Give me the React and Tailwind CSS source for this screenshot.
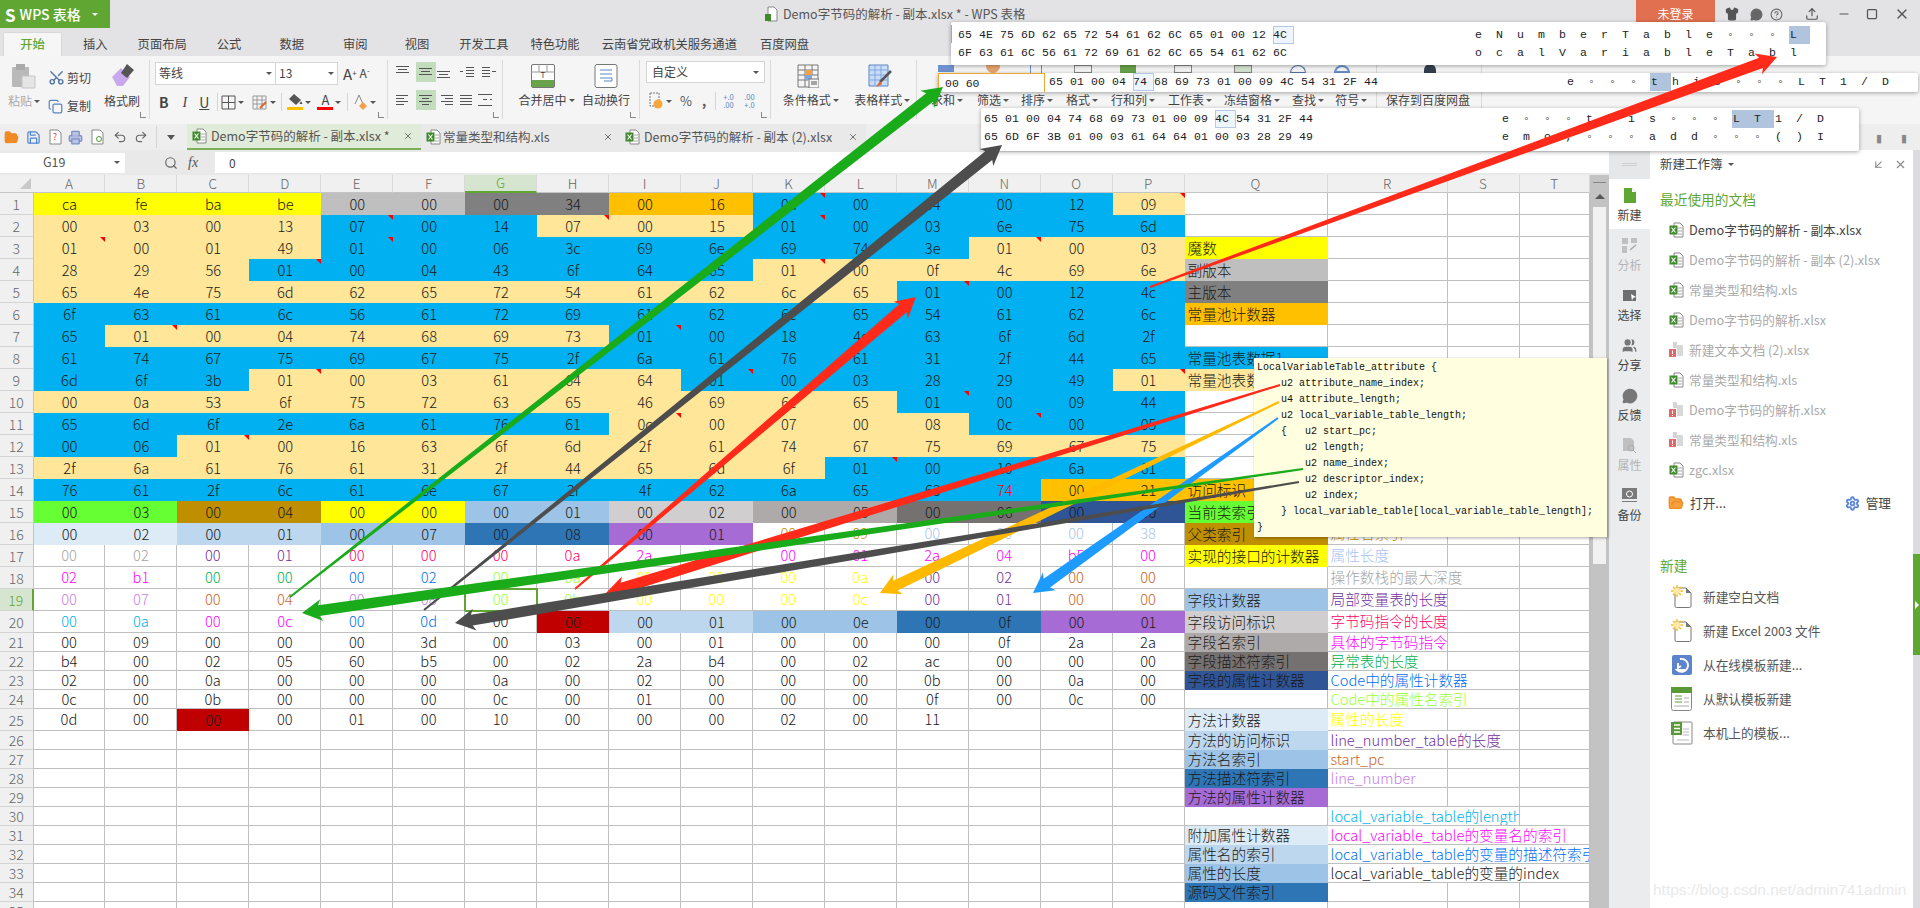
import React from 'react';
import { Scissors, Copy, Undo2, Redo2, Save, Printer, FolderOpen, Search, X, Minus, Square, Shirt, HelpCircle, Settings, Users, MessageCircle, Upload, ArrowDownLeft } from 'lucide-react';

const COLS = 'ABCDEFGHIJKLMNOP'.split('');
const DATA = [
  'ca fe ba be 00 00 00 34 00 16 0a 00 04 00 12 09',
  '00 03 00 13 07 00 14 07 00 15 01 00 03 6e 75 6d',
  '01 00 01 49 01 00 06 3c 69 6e 69 74 3e 01 00 03',
  '28 29 56 01 00 04 43 6f 64 65 01 00 0f 4c 69 6e',
  '65 4e 75 6d 62 65 72 54 61 62 6c 65 01 00 12 4c',
  '6f 63 61 6c 56 61 72 69 61 62 6c 65 54 61 62 6c',
  '65 01 00 04 74 68 69 73 01 00 18 4c 63 6f 6d 2f',
  '61 74 67 75 69 67 75 2f 6a 61 76 61 31 2f 44 65',
  '6d 6f 3b 01 00 03 61 64 64 01 00 03 28 29 49 01',
  '00 0a 53 6f 75 72 63 65 46 69 6c 65 01 00 09 44',
  '65 6d 6f 2e 6a 61 76 61 0c 00 07 00 08 0c 00 05',
  '00 06 01 00 16 63 6f 6d 2f 61 74 67 75 69 67 75',
  '2f 6a 61 76 61 31 2f 44 65 6d 6f 01 00 10 6a 61',
  '76 61 2f 6c 61 6e 67 2f 4f 62 6a 65 63 74 00 21',
  '00 03 00 04 00 00 00 01 00 02 00 05 00 06 00 00',
  '00 02 00 01 00 07 00 08 00 01 00 09 00 00 00 38',
  '00 02 00 01 00 00 00 0a 2a b7 00 01 2a 04 b5 00',
  '02 b1 00 00 00 02 00 0a 00 00 00 0a 00 02 00 00',
  '00 07 00 04 00 08 00 0b 00 00 00 0c 00 01 00 00',
  '00 0a 00 0c 00 0d 00 00 00 01 00 0e 00 0f 00 01',
  '00 09 00 00 00 3d 00 03 00 01 00 00 00 0f 2a 2a',
  'b4 00 02 05 60 b5 00 02 2a b4 00 02 ac 00 00 00',
  '02 00 0a 00 00 00 0a 00 02 00 00 00 0b 00 0a 00',
  '0c 00 0b 00 00 00 0c 00 01 00 00 00 0f 00 0c 00',
  '0d 00 00 00 01 00 10 00 00 00 02 00 11',
].map((r) => r.split(' '));

const FILLS = [
  'YYYYGGDDOOBBBBBP','PPPPBBBPPPBBBBBB','PPPPBBBBBBBBBPPP','PPPBBBBBBBPPPPPP','PPPPPPPPPPPPBBBB',
  'BBBBBBBBBBBBBBBB','BPPPPPPPBBBBBBBB','BBBBBBBBBBBBBBBB','BBBPPPPPPBBBBBBP','PPPPPPPPPPPPBBBB',
  'BBBBBBBBPPPPPBBB','BBPPPPPPPPPPPPPP','PPPPPPPPPPPBBBBB','BBBBBBBBBBBBBBOO','LLUUYY33556677NN',
  '11223344VV......','................','................','................','.......R223344VV',
  '................','................','................','................','..R.............',
];
const BG = {
  Y:'bg-[#ffff00]',G:'bg-[#bfbfbf]',D:'bg-[#808080]',O:'bg-[#ffc000]',B:'bg-[#00b0f0]',P:'bg-[#ffe699]',
  L:'bg-[#66ff33]',U:'bg-[#bf8f00]',1:'bg-[#ddebf7]',2:'bg-[#bdd7ee]',3:'bg-[#9dc3e6]',4:'bg-[#2e75b6]',
  V:'bg-[#a66bd4]',5:'bg-[#d0cece]',6:'bg-[#aeaaaa]',7:'bg-[#767171]',N:'bg-[#2f5597]',R:'bg-[#c00000]',
};
const TC = {
  a:'text-[#a5a5a5]',b:'text-[#7030a0]',c:'text-[#ff0066]',d:'text-[#ff00ff]',e:'text-[#00b050]',f:'text-[#0070f0]',
  g:'text-[#99ff33]',h:'text-[#ffff00]',i:'text-[#d0641e]',j:'text-[#c77de8]',k:'text-[#00b0f0]',l:'text-[#bf8f00]',
  m:'text-[#a9c4ee]',n:'text-[#ff0000]','.':'text-[#1a1a1a]',
};
const TEXTS = {
  13:'.............n..',15:'..........llmmmm',16:'aabbccccdddddddd',17:'ddeeffgghhhhbbii',18:'jjiijjgghhhhbbii',19:'kkddff..........',
};
const MARKS = new Set(['K1','P1','E2','H2','K2','A3','E3','N3','D4','K4','M5','B7','I7','D9','J9','P9','M10','I11','N11','C12','L13']);

const Q = {
  3:['魔数','Y'],4:['副版本','G'],5:['主版本','D'],6:['常量池计数器','O'],8:['常量池表数据1','B'],9:['常量池表数据2','P'],
  14:['访问标识','O'],15:['当前类索引','L'],16:['父类索引','U'],17:['实现的接口的计数器','Y'],19:['字段计数器','3'],
  20:['字段访问标识','5'],21:['字段名索引','6'],22:['字段描述符索引','7'],23:['字段的属性计数器','N'],25:['方法计数器','1'],
  26:['方法的访问标识','2'],27:['方法名索引','3'],28:['方法描述符索引','4'],29:['方法的属性计数器','V'],31:['附加属性计数器','1'],
  32:['属性名的索引','2'],33:['属性的长度','3'],34:['源码文件索引','4'],
};
const R = {
  16:['属性名索引','l',1],17:['属性长度','m',1],18:['操作数栈的最大深度','a',2],19:['局部变量表的长度','b',1],20:['字节码指令的长度','c',1],
  21:['具体的字节码指令','d',1],22:['异常表的长度','e',1],23:['Code中的属性计数器','f',2],24:['Code中的属性名索引','g',2],25:['属性的长度','h',1],
  26:['line_number_table的长度','b',2],27:['start_pc','i',1],28:['line_number','j',1],30:['local_variable_table的length','k',2],
  31:['local_variable_table的变量名的索引','d',3],32:['local_variable_table的变量的描述符索引','f',3],33:['local_variable_table的变量的index','.',3],
};
const LINE = 'border-r border-b border-[#bfbfbf]';

function Arrow({ t, h, c, w0 = 2, w1 = 11, hl = 17, hw = 11 }) {
  const dx = h[0] - t[0], dy = h[1] - t[1], L = Math.hypot(dx, dy);
  const ux = dx / L, uy = dy / L, nx = -uy, ny = ux;
  const nk = [h[0] - ux * hl, h[1] - uy * hl];
  const bk = [h[0] - ux * (hl + 3), h[1] - uy * (hl + 3)];
  const pts = [
    [t[0] + nx * w0 / 2, t[1] + ny * w0 / 2],
    [nk[0] + nx * w1 / 2, nk[1] + ny * w1 / 2],
    [bk[0] + nx * hw, bk[1] + ny * hw],
    h,
    [bk[0] - nx * hw, bk[1] - ny * hw],
    [nk[0] - nx * w1 / 2, nk[1] - ny * w1 / 2],
    [t[0] - nx * w0 / 2, t[1] - ny * w0 / 2],
  ].map((p) => p.join(',')).join(' ');
  return <polygon points={pts} fill={c} />;
}

const Hex = ({ s, hi }) => (
  <div className="flex">
    {s.split(' ').map((b, i) => (
      <span key={i} className={`w-[21px] h-[18px] leading-[18px] shrink-0 text-left ${hi === i ? 'bg-[#eef5fc] shadow-[inset_0_0_0_1px_#b4c9e6]' : ''}`}>{b}</span>
    ))}
  </div>
);
const Asc = ({ s, hi = [] }) => (
  <div className="flex">
    {s.split(' ').map((b, i) => (
      <span key={i} className={`w-[21px] h-[18px] leading-[18px] shrink-0 text-left pl-[1px] ${hi.includes(i) ? 'bg-[#b0c4de]' : ''}`}>{b}</span>
    ))}
  </div>
);

const XlsIcon = () => (
  <svg width="15" height="16" viewBox="0 0 15 16" className="shrink-0">
    <path d="M5 1h6l3 3v11H5z" fill="#fff" stroke="#888" />
    <path d="M9 6h4M9 9h4M9 12h4" stroke="#aaa" />
    <rect x="0.5" y="3.5" width="8" height="9" fill="#3f8a2c" />
    <path d="M2.5 5.500l4 5M6.500 5.500l-4 5" stroke="#fff" strokeWidth="1.2" />
  </svg>
);
const ErrIcon = () => (
  <svg width="15" height="16" viewBox="0 0 15 16" className="shrink-0">
    <path d="M4 0h4v6H4z" fill="#d4d4d4" />
    <path d="M8 3h6v11H8z" fill="#d8d8d8" />
    <rect x="0" y="7" width="7" height="8" fill="#e0686a" />
    <path d="M3.500 8.500v3.500M3.500 13v1" stroke="#fff" />
  </svg>
);
const NewDoc = () => (
  <svg width="22" height="24" viewBox="0 0 22 24">
    <path d="M4 3h11l5 5v13a1.500 1.500 0 0 1-1.500 1.500h-13A1.500 1.500 0 0 1 4 21z" fill="#fff" stroke="#777" />
    <path d="M15 3l5 5h-5z" fill="#777" />
    <circle cx="6" cy="6" r="3.500" fill="#ffe9a8" />
    <path d="M6 0v2.500M6 9.500V12M0 6h2.500M9.500 6H12M2 2l1.800 1.800M8.200 8.200L10 10M10 2L8.200 3.800M3.800 8.200L2 10" stroke="#f9bd20" strokeWidth="1.500" />
  </svg>
);

const Lines = ({ rows, w = 16, h = 14, c = '#555' }) => (
  <svg width={w} height={h} viewBox={`0 0 ${w} ${h}`} className="shrink-0">
    {rows.map(([a, b, y], i) => <path key={i} d={`M${a} ${y + 0.5}H${b}`} stroke={c} />)}
  </svg>
);
const Dd = ({ c = 'ml-[2px]' }) => <span className={`inline-block ${c} border-x-[3px] border-x-transparent border-t-[3px] border-t-[#555] shrink-0`} />;
const Launch = () => <span className="absolute right-[3px] bottom-[1px] w-[6px] h-[6px] border-l border-b border-[#888]" />;

function RibbonSep({ w, children }) {
  return <div className={`${w} h-[59px] relative border-r border-[#dadada] shrink-0 flex`}>{children}</div>;
}

const TABS = [
  ['插入', 'ml-[21px]'], ['页面布局', 'ml-[30px]'], ['公式', 'ml-[30px]'], ['数据', 'ml-[38px]'], ['审阅', 'ml-[39px]'], ['视图', 'ml-[37px]'],
  ['开发工具', 'ml-[30px]'], ['特色功能', 'ml-[22px]'], ['云南省党政机关服务通道', 'ml-[22px]'], ['百度网盘', 'ml-[23px]'],
];
const MENU = [
  ['筛选', 'ml-[14px]'], ['排序', 'ml-[12px]'], ['格式', 'ml-[13px]'], ['行和列', 'ml-[13px]'], ['工作表', 'ml-[13px]'], ['冻结窗格', 'ml-[12px]'], ['查找', 'ml-[12px]'], ['符号', 'ml-[11px]'],
];
const RECENT = [
  ['Demo字节码的解析 - 副本.xlsx', 0, 'text-[#444]'], ['Demo字节码的解析 - 副本 (2).xlsx', 0, 'text-[#aaa]'], ['常量类型和结构.xls', 0, 'text-[#aaa]'],
  ['Demo字节码的解析.xlsx', 0, 'text-[#aaa]'], ['新建文本文档 (2).xlsx', 1, 'text-[#aaa]'], ['常量类型和结构.xls', 0, 'text-[#aaa]'],
  ['Demo字节码的解析.xlsx', 1, 'text-[#aaa]'], ['常量类型和结构.xls', 1, 'text-[#aaa]'], ['zgc.xlsx', 0, 'text-[#aaa]'],
];

const SideItem = ({ label, icon, active, dim }) => (
  <div className={`h-[50px] flex flex-col items-center justify-center gap-[1px] ${active ? 'bg-white' : ''} ${dim ? 'text-[#b5b5b5]' : 'text-[#444]'}`}>
    <div className="h-[20px] flex items-center">{icon}</div>
    <span className="text-[12px] leading-[16px]">{label}</span>
  </div>
);

export default function App() {
  const rowNums = Array.from({ length: 35 }, (_, i) => i + 1);
  return (
    <div className="relative w-[1920px] h-[908px] overflow-hidden bg-white text-[12px] text-[#333] [font-family:'Noto_Sans_CJK_SC','Noto_Sans',sans-serif]">
      {/* title bar */}
      <div className="h-[28px] bg-[#e3e3e5] flex items-center">
        <div className="w-[110px] h-[28px] bg-[#5fa732] text-white flex items-center pl-[5px] shrink-0">
          <span className="text-[17px] font-bold leading-none">S</span>
          <span className="ml-[4px] text-[14px] font-medium">WPS 表格</span>
          <Dd c="ml-[11px] border-t-white" />
        </div>
        <svg width="14" height="16" viewBox="0 0 14 16" className="ml-[654px]"><path d="M4 1h6l3 3v11H4z" fill="#fff" stroke="#888" /><rect x="1" y="8" width="6" height="7" fill="#3f8a2c" /></svg>
        <span className="ml-[5px] text-[12.500px] text-[#555]">Demo字节码的解析 - 副本.xlsx * - WPS 表格</span>
        <div className="ml-auto w-[79px] h-[28px] bg-[#e07050] text-white flex items-center justify-center text-[12px] mr-[10px]">未登录</div>
        <Shirt size={14} className="text-[#555] fill-[#555]" />
        <MessageCircle size={13} className="ml-[11px] text-[#666] fill-[#666]" />
        <HelpCircle size={13} className="ml-[7px] text-[#666]" />
        <Upload size={14} className="ml-[22px] text-[#555]" />
        <Minus size={14} className="ml-[18px] text-[#555]" />
        <Square size={12} className="ml-[15px] text-[#555]" strokeWidth={2.5} />
        <X size={16} className="ml-[16px] mr-[10px] text-[#555]" />
      </div>
      {/* tabs */}
      <div className="h-[28px] bg-[#e3e3e5] flex items-end pl-[3px] text-[12.300px] text-[#444]">
        <div className="w-[59px] h-[24px] bg-[#f6f6f7] border border-b-0 border-[#d8d8d8] rounded-t-[2px] flex items-center justify-center text-[#5fa732] font-medium">开始</div>
        {TABS.map(([t, c]) => <span key={t} className={`${c} h-[24px] leading-[24px]`}>{t}</span>)}
      </div>
      {/* ribbon */}
      <div className="h-[68px] bg-[#f5f5f6] pt-[4px] flex text-[#444]">
        <RibbonSep w="w-[150px]">
          <div className="w-[48px] flex flex-col items-center pt-[3px] text-[#aaa]">
            <svg width="26" height="26" viewBox="0 0 26 26"><rect x="1" y="4" width="17" height="20" rx="1" fill="#b9b9b9" /><rect x="5" y="1" width="9" height="6" fill="#aaa" /><path d="M11 13h13v12H11z" fill="#e5e5e5" stroke="#c5c5c5" /></svg>
            <span className="mt-[3px] flex items-center">粘贴<Dd /></span>
          </div>
          <div className="w-[54px] flex flex-col pt-[2px]">
            <div className="h-[31px] flex items-center"><Scissors size={17} className="mr-[2px] text-[#5577aa] -rotate-90" />剪切</div>
            <div className="h-[26px] flex items-center"><Copy size={15} className="mr-[4px] text-[#5b86c4]" />复制</div>
          </div>
          <div className="w-[40px] flex flex-col items-center pt-[3px]">
            <svg width="26" height="26" viewBox="0 0 26 26"><path d="M3 14l9-9 9 9-7 9H8z" fill="#c9a9ee" /><path d="M12 10l6-9 7 6-7 8z" fill="#555" /></svg>
            <span className="mt-[3px]">格式刷</span>
          </div>
          <Launch />
        </RibbonSep>
        <RibbonSep w="w-[238px]">
          <div className="flex flex-col pl-[5px] w-full">
            <div className="flex items-center h-[24px] mt-[1px]">
              <div className="w-[121px] h-[23px] bg-white border border-[#d4d4d4] flex items-center px-[3px]">等线<Dd c="ml-auto" /></div>
              <div className="w-[62px] h-[23px] bg-white border border-l-0 border-[#d4d4d4] flex items-center px-[3px]">13<Dd c="ml-auto" /></div>
              <span className="ml-[5px] text-[15px] leading-none">A<sup className="text-[8px]">+</sup></span>
              <span className="ml-[3px] text-[12px] leading-none">A<sup className="text-[8px]">-</sup></span>
            </div>
            <div className="flex items-center h-[30px] mt-[2px] text-[13px]">
              <b className="ml-[4px] text-[14px]">B</b>
              <i className="ml-[14px] text-[14px] [font-family:'Liberation_Serif',serif]">I</i>
              <u className="ml-[12px] text-[14px]">U</u>
              <span className="ml-[8px] w-px h-[18px] bg-[#d5d5d5]" />
              <svg width="15" height="15" viewBox="0 0 15 15" className="ml-[3px]"><path d="M1 1h13v13H1zM7.500 1v13M1 7.500h13" fill="none" stroke="#555" /></svg><Dd />
              <svg width="16" height="15" viewBox="0 0 16 15" className="ml-[8px]"><path d="M1 1h13v13H1zM1 5h13M1 9h13M5 1v13M10 1v13" fill="none" stroke="#999" /><path d="M8 13l6-6" stroke="#e0642a" strokeWidth="2" /></svg><Dd />
              <span className="ml-[5px] w-px h-[18px] bg-[#d5d5d5]" />
              <div className="ml-[5px] w-[16px] flex flex-col items-center"><svg width="15" height="12" viewBox="0 0 15 12"><path d="M6 0l7 6-5 5-7-6z" fill="#555" /><path d="M13 7l1.500 3h-3z" fill="#555" /></svg><span className="w-[16px] h-[3px] mt-[1px] bg-[#ffbe00]" /></div><Dd />
              <div className="ml-[6px] w-[16px] flex flex-col items-center"><span className="text-[13px] leading-[12px]">A</span><span className="w-[16px] h-[3px] mt-[1px] bg-[#ff0000]" /></div><Dd />
              <span className="ml-[6px] w-px h-[18px] bg-[#d5d5d5]" />
              <svg width="15" height="17" viewBox="0 0 15 17" className="ml-[5px]"><path d="M2 10L6 1l4 9" fill="none" stroke="#888" /><path d="M6 12l4-4 4 4-4 4z" fill="#f5a049" /></svg><Dd />
            </div>
          </div>
          <Launch />
        </RibbonSep>
        <RibbonSep w="w-[115px]">
          <div className="flex flex-col pl-[7px] w-full">
            <div className="flex items-center h-[20px] mt-[2px]">
              <Lines rows={[[1,14,1],[3,12,4],[1,14,7]]} />
              <div className="ml-[5px] w-[20px] h-[20px] bg-[#c3dcbd] flex items-center justify-center"><Lines rows={[[1,14,3],[3,12,6],[1,14,9]]} /></div>
              <Lines rows={[[1,14,6],[3,12,9],[1,14,12]]} />
              <span className="ml-[7px]"><Lines rows={[[7,15,2],[7,15,5],[7,15,8],[7,15,11],[1,4,6]]} /></span>
              <span className="ml-[6px]"><Lines rows={[[1,9,2],[1,9,5],[1,9,8],[1,9,11],[11,15,6]]} /></span>
            </div>
            <div className="flex items-center h-[20px] mt-[8px]">
              <Lines rows={[[1,13,2],[1,9,5],[1,13,8],[1,9,11]]} />
              <div className="ml-[5px] w-[20px] h-[20px] bg-[#c3dcbd] flex items-center justify-center"><Lines rows={[[1,14,2],[4,11,5],[1,14,8],[4,11,11]]} /></div>
              <span className="ml-[4px]"><Lines rows={[[1,13,2],[5,13,5],[1,13,8],[5,13,11]]} w={14} /></span>
              <span className="ml-[5px]"><Lines rows={[[1,13,2],[1,13,5],[1,13,8],[1,13,11]]} w={14} /></span>
              <span className="ml-[4px]"><Lines rows={[[1,15,1],[1,15,12],[6,10,6],[13,15,6]]} /></span>
            </div>
          </div>
          <Launch />
        </RibbonSep>
        <RibbonSep w="w-[137px]">
          <div className="w-[79px] flex flex-col items-center pt-[4px]">
            <svg width="24" height="24" viewBox="0 0 24 24"><rect x="0.500" y="0.500" width="23" height="23" rx="1.500" fill="#fff" stroke="#777" /><path d="M0 8h24M8 0v8M16 0v8" stroke="#999" /><rect x="1" y="16" width="22" height="7" fill="#69a34a" /><text x="12" y="14" fontSize="8" textAnchor="middle" fill="#444">T</text></svg>
            <span className="mt-[3px] pl-[8px] flex items-center">合并居中<Dd /></span>
          </div>
          <div className="w-[48px] flex flex-col items-center pt-[4px]">
            <svg width="24" height="24" viewBox="0 0 24 24"><rect x="1" y="0.500" width="22" height="23" rx="2" fill="#fff" stroke="#777" /><path d="M6 6h12M6 10h12M6 14h12v3H10" fill="none" stroke="#5b86c4" /></svg>
            <span className="mt-[3px]">自动换行</span>
          </div>
          <Launch />
        </RibbonSep>
        <RibbonSep w="w-[131px]">
          <div className="flex flex-col pl-[6px]">
            <div className="w-[119px] h-[22px] mt-[1px] bg-white border border-[#d4d4d4] flex items-center px-[5px]">自定义<Dd c="ml-auto" /></div>
            <div className="flex items-center h-[30px] mt-[3px] text-[#555] text-[13px]">
              <svg width="15" height="18" viewBox="0 0 15 18" className="ml-[3px]"><path d="M1 1h9v13H1z" fill="none" stroke="#777" strokeDasharray="2 1" /><circle cx="9" cy="12" r="4.500" fill="#f5a93c" /></svg><Dd />
              <span className="ml-[8px]">%</span>
              <span className="ml-[10px] font-bold">,</span>
              <span className="ml-[9px] w-px h-[18px] bg-[#d5d5d5]" />
              <span className="ml-[7px] text-[7.500px] leading-[8px] w-[14px] text-[#5b86c4]">+.0<br />.00</span>
              <span className="ml-[7px] text-[7.500px] leading-[8px] w-[14px] text-[#5b86c4]">.00<br />+.0</span>
            </div>
          </div>
          <Launch />
        </RibbonSep>
        <RibbonSep w="w-[146px]">
          <div className="w-[74px] flex flex-col items-center pt-[4px]">
            <svg width="22" height="24" viewBox="0 0 22 24"><path d="M1 1h20v22H1zM1 6h20M1 11h20M1 16h10M8 1v22M15 1v10" fill="none" stroke="#777" /><rect x="8" y="6" width="7" height="5" fill="#f5a049" /><rect x="8" y="11" width="7" height="5" fill="#7fa7e0" /><rect x="12" y="15" width="10" height="9" fill="#f5f5f6" stroke="#777" /><path d="M14 20h6M14 18h6" stroke="#555" /></svg>
            <span className="mt-[3px] pl-[6px] flex items-center">条件格式<Dd /></span>
          </div>
          <div className="w-[72px] flex flex-col items-center pt-[4px]">
            <svg width="24" height="24" viewBox="0 0 24 24"><path d="M1 1h19v21H1z" fill="#c8dcf5" stroke="#5b86c4" /><path d="M1 6h19M1 11h19M1 16h19M7 1v21M13 1v21" stroke="#7fa7e0" /><path d="M23 7L12 18" stroke="#555" strokeWidth="2.500" /><path d="M12 17l-4 6 6-3z" fill="#e0642a" /></svg>
            <span className="mt-[3px] pl-[4px] flex items-center">表格样式<Dd /></span>
          </div>
        </RibbonSep>
        <RibbonSep w="w-[460px]">
          <div className="flex items-center h-[20px] mt-[30px] pl-[14px] whitespace-nowrap">
            <span>求和</span><Dd />
            {MENU.map(([t, c]) => <span key={t} className={`${c} flex items-center shrink-0`}>{t}<Dd /></span>)}
          </div>
        </RibbonSep>
        <RibbonSep w="w-[105px]">
          <div className="h-[20px] mt-[30px] pl-[9px] flex items-center whitespace-nowrap">保存到百度网盘</div>
        </RibbonSep>
      </div>
      {/* document tabs */}
      <div className="h-[26px] bg-[#eeeeef] flex items-center text-[12.500px] text-[#555]">
        <FolderOpen size={15} className="ml-[4px] text-[#f08a24] fill-[#f08a24]" />
        <Save size={15} className="ml-[7px] text-[#4f86d2]" />
        <svg width="15" height="16" viewBox="0 0 15 16" className="ml-[6px]"><path d="M3 1h8l3 3v11H3z" fill="#fff" stroke="#888" /><text x="8" y="11" fontSize="9" textAnchor="middle" fill="#d43c3c">?</text></svg>
        <Printer size={15} className="ml-[6px] text-[#7c8fc4] fill-[#b8c2e2]" />
        <svg width="15" height="16" viewBox="0 0 15 16" className="ml-[7px]"><path d="M2 1h8l3 3v11H2z" fill="#fff" stroke="#888" /><circle cx="9" cy="10" r="2.500" fill="none" stroke="#4a9a36" /></svg>
        <Undo2 size={14} className="ml-[8px] text-[#666]" />
        <Redo2 size={14} className="ml-[7px] text-[#666]" />
        <span className="ml-[8px] w-px h-[22px] bg-[#d5d5d5]" />
        <Dd c="ml-[10px] border-x-[4px] border-t-[5px]" />
        <div className="ml-[12px] w-[234px] h-[26px] bg-[#e1ebd9] border-b-2 border-[#7caf5a] flex items-center pl-[5px]">
          <XlsIcon /><span className="ml-[4px]">Demo字节码的解析 - 副本.xlsx *</span><X size={10} className="ml-auto mr-[8px]" />
        </div>
        <div className="w-[197px] h-[26px] bg-[#e9e9ea] flex items-center pl-[5px]">
          <XlsIcon /><span className="ml-[2px]">常量类型和结构.xls</span><X size={10} className="ml-auto mr-[5px]" />
        </div>
        <div className="w-[248px] h-[26px] bg-[#e9e9ea] flex items-center pl-[7px]">
          <XlsIcon /><span className="ml-[4px]">Demo字节码的解析 - 副本 (2).xlsx</span><X size={10} className="ml-auto mr-[8px]" />
        </div>
        <span className="ml-auto mr-[19px] text-[#888] text-[11px]">▮</span>
        <span className="mr-[13px] text-[#888] text-[11px]">▮</span>
      </div>
      {/* body */}
      <div className="flex h-[758px]">
        <div className="w-[1609px] flex flex-col shrink-0">
          <div className="h-[25px] bg-[#e9e9ea] flex items-center">
            <div className="w-[125px] h-[20px] bg-white flex items-center pl-[43px] text-[12.500px] text-[#555]">G19<Dd c="ml-auto mr-[5px]" /></div>
            <Search size={14} className="ml-[39px] text-[#666]" />
            <span className="ml-[10px] text-[14px] italic text-[#555] [font-family:'Liberation_Serif',serif]">fx</span>
            <div className="ml-[17px] flex-1 h-[21px] bg-white pl-[14px] flex items-center text-[#444]">0</div>
          </div>
          <div className="flex flex-1 min-h-0">
            <div className="w-[1590px] overflow-hidden">
              <div className="grid grid-cols-[33.5px_repeat(16,71.95px)_143px_120px_72px_70.3px] grid-rows-[18px_repeat(20,22px)_repeat(4,19px)_22px_repeat(10,19px)] text-[14.670px] font-light leading-none text-[#1a1a1a]">
                <div className="bg-[#f0f0f0] border-b border-[#c4c4c4] flex items-end justify-end p-[3px]">
                  <span className="border-l-[11px] border-b-[11px] border-l-transparent border-b-[#c8c8c8]" />
                </div>
                {[...COLS, 'Q', 'R', 'S', 'T'].map((c) => (
                  <div key={c} className={`border-r border-[#d8d8d8] flex items-center justify-center text-[13.500px] ${c === 'G' ? 'bg-[#d6e5cf] border-b-2 border-b-[#5fa732] text-[#5fa732]' : 'bg-[#f0f0f0] border-b border-b-[#c4c4c4] text-[#666]'}`}>{c}</div>
                ))}
                {rowNums.map((n) => {
                  const r = n - 1;
                  const vals = DATA[r] || [];
                  const fills = FILLS[r] || '................';
                  const tc = TEXTS[r] || '................';
                  const q = Q[n];
                  const rc = R[n];
                  const sSkip = rc && rc[2] >= 2;
                  const tSkip = rc && rc[2] >= 3;
                  return (
                    <React.Fragment key={n}>
                      <div className={`border-b border-[#d4d4d4] flex items-center justify-center text-[14px] ${n === 19 ? 'bg-[#d6e5cf] border-r-2 border-r-[#5fa732] text-[#5fa732]' : 'bg-[#f0f0f0] border-r border-r-[#c4c4c4] text-[#666]'}`}>{n}</div>
                      {COLS.map((c, i) => {
                        const f = fills[i];
                        const sel = n === 19 && c === 'G';
                        return (
                          <div key={c} className={`relative flex items-center justify-center ${f === '.' ? LINE : BG[f]} ${TC[tc[i]]} ${sel ? 'outline-2 -outline-offset-1 outline-[#5fa732]' : ''}`}>
                            {vals[i]}
                            {MARKS.has(c + n) && <span className="absolute top-0 right-0 border-t-[5px] border-l-[5px] border-t-[#ff0000] border-l-transparent" />}
                          </div>
                        );
                      })}
                      <div className={`flex items-center pl-[3px] ${q ? BG[q[1]] : LINE} whitespace-nowrap`}>{q ? q[0] : ''}</div>
                      <div className={`flex items-center pl-[3px] whitespace-nowrap overflow-hidden ${LINE} ${rc ? TC[rc[1]] : ''} ${rc && rc[2] === 2 ? 'col-span-2' : ''} ${rc && rc[2] === 3 ? 'col-span-3' : ''}`}>{rc ? rc[0] : ''}</div>
                      {!sSkip && <div className={LINE} />}
                      {!tSkip && <div className={LINE} />}
                    </React.Fragment>
                  );
                })}
              </div>
            </div>
            <div className="w-[19px] bg-[#c3c3c3] flex flex-col items-center">
              <span className="mt-[7px] w-[13px] h-px bg-[#888]" />
              <span className="mt-[11px] border-x-[5px] border-x-transparent border-b-[5px] border-b-[#555]" />
              <div className="mt-[8px] w-[13px] h-[357px] bg-[#f1f1f1]" />
            </div>
          </div>
        </div>
        {/* sidebar */}
        <div className="w-[41px] bg-[#ebecee] shrink-0 flex flex-col">
          <div className="h-[29px] bg-[#e6e7e9] flex items-center justify-center"><span className="w-[15px] h-[3px] border-y border-[#d0d0d0]" /></div>
          <SideItem active label="新建" icon={<svg width="12" height="15" viewBox="0 0 12 15"><path d="M0 0h8l4 4v11H0z" fill="#5fa732" /><path d="M8 0l4 4H8z" fill="#fff" /></svg>} />
          <SideItem dim label="分析" icon={<svg width="15" height="15" viewBox="0 0 15 15"><path d="M0 0h6v6H0zM0 8h5v7H0zM9 0h6v5H9z" fill="#c0c0c0" /><path d="M8 12l6-5" stroke="#aaa" strokeWidth="1.500" /></svg>} />
          <SideItem label="选择" icon={<svg width="14" height="12" viewBox="0 0 14 12"><rect width="13" height="11" fill="#6f6f6f" /><path d="M8 4l5 3-3 1-1 3z" fill="#fff" /></svg>} />
          <SideItem label="分享" icon={<Users size={15} className="fill-[#777] text-[#777]" />} />
          <SideItem label="反馈" icon={<MessageCircle size={16} className="fill-[#777] text-[#777]" />} />
          <SideItem dim label="属性" icon={<svg width="16" height="16" viewBox="0 0 16 16"><path d="M1 0h8l3 3v10H1z" fill="#c0c0c0" /><circle cx="9" cy="10" r="3" fill="none" stroke="#aaa" /><path d="M11 12l3 3" stroke="#aaa" /></svg>} />
          <SideItem label="备份" icon={<svg width="16" height="15" viewBox="0 0 16 15"><rect width="15" height="11" fill="#7a7a7a" /><path d="M0 13.500h15" stroke="#7a7a7a" /><circle cx="7.500" cy="6" r="3" fill="none" stroke="#fff" /></svg>} />
        </div>
        {/* panel */}
        <div className="w-[263px] bg-white shrink-0 flex flex-col pl-[10px] text-[12.700px]">
          <div className="h-[28px] flex items-center text-[12.500px] text-[#444]">
            新建工作簿<Dd c="ml-[5px]" />
            <ArrowDownLeft size={13} className="ml-auto text-[#888]" />
            <X size={13} className="ml-[9px] mr-[6px] text-[#888]" />
          </div>
          <div className="mt-[11px] text-[#5fa732] text-[13.700px] leading-[20px]">最近使用的文档</div>
          <div className="mt-[6px] flex flex-col">
            {RECENT.map(([t, e, c], i) => (
              <div key={i} className={`h-[30px] pl-[9px] flex items-center whitespace-nowrap ${c}`}>
                {e ? <ErrIcon /> : <XlsIcon />}
                <span className="ml-[5px]">{t}</span>
              </div>
            ))}
          </div>
          <div className="mt-[3px] h-[30px] flex items-center pl-[8px] text-[#444]">
            <FolderOpen size={16} className="text-[#f08a24] fill-[#f5a13c]" />
            <span className="ml-[6px]">打开...</span>
            <Settings size={15} className="ml-auto text-[#5b86d8]" strokeWidth={3} />
            <span className="ml-[6px] mr-[22px]">管理</span>
          </div>
          <div className="mt-[37px] text-[#5fa732] text-[13.700px] leading-[20px]">新建</div>
          <div className="mt-[5px] flex flex-col pl-[11px] text-[#555]">
            <div className="h-[34px] flex items-center"><NewDoc /><span className="ml-[10px]">新建空白文档</span></div>
            <div className="h-[34px] flex items-center"><NewDoc /><span className="ml-[10px]">新建 Excel 2003 文件</span></div>
            <div className="h-[34px] flex items-center">
              <svg width="22" height="22" viewBox="0 0 22 22" className="shrink-0"><rect x="1" y="1" width="20" height="20" rx="2" fill="#5b84cc" /><path d="M9 5a6.500 6.500 0 1 1-3 11l8 0M7 9v5l3-2" fill="none" stroke="#fff" strokeWidth="1.800" /></svg>
              <span className="ml-[10px]">从在线模板新建...</span>
            </div>
            <div className="h-[34px] flex items-center">
              <svg width="22" height="24" viewBox="0 0 22 24" className="shrink-0"><rect x="0.500" y="0.500" width="20" height="23" rx="2" fill="#fff" stroke="#888" /><rect x="0" y="0" width="21" height="6" fill="#5a9a36" /><path d="M13 11h5M13 15h5M3 19h15" fill="none" stroke="#aaa" /><path d="M4 9h7M4 12h7M4 15h7" stroke="#5a9a36" /></svg>
              <span className="ml-[10px]">从默认模板新建</span>
            </div>
            <div className="h-[34px] flex items-center">
              <svg width="22" height="24" viewBox="0 0 22 24" className="shrink-0"><rect x="2" y="1" width="19" height="22" rx="1" fill="#fff" stroke="#888" /><path d="M12 8h6M12 11h6M12 14h6M6 19h12" stroke="#bbb" /><rect x="0" y="1" width="11" height="13" fill="#5a9a36" /><path d="M3 4h6M3 7.500h6M3 11h6" stroke="#fff" strokeWidth="1.500" /></svg>
              <span className="ml-[10px]">本机上的模板...</span>
            </div>
          </div>
        </div>
        <div className="w-[7px] bg-[#dcdcde] shrink-0 pt-[404px]">
          <div className="h-[101px] bg-[#5fa732] flex items-center"><span className="ml-[2px] border-y-[4px] border-l-[4px] border-y-transparent border-l-white" /></div>
        </div>
      </div>
      {/* ribbon icons peeking between popups */}
      <div className="absolute left-[935px] top-[65px] w-[440px] h-[8px] flex items-start gap-0 overflow-hidden">
        <span className="ml-[3px] w-[16px] h-[7px] bg-[#6d92cf]" />
        <span className="ml-[32px] w-[14px] h-[8px] bg-[#e5a66f] rounded-b-full" />
        <span className="ml-[30px] w-[12px] h-[8px] border-x border-[#6d92cf]" />
        <span className="ml-[32px] w-[18px] h-[8px] border border-[#888]" />
        <span className="ml-[28px] w-[16px] h-[8px] bg-[#69a34a]" />
        <span className="ml-[38px] w-[18px] h-[8px] border border-[#888]" />
        <span className="ml-[42px] w-[18px] h-[8px] bg-[#d5e4cf] border border-[#888]" />
        <span className="ml-[38px] w-[16px] h-[8px] rounded-t-full border border-[#5577aa]" />
        <span className="ml-[28px] w-[16px] h-[8px] rounded-t-full border-2 border-[#6d92cf]" />
      </div>
      <div className="absolute left-[1424px] top-[64px] w-[12px] h-[9px] rounded-t-full bg-[#33414f]" />
      {/* hex popups */}
      <div className="absolute left-[951px] top-[22px] w-[875px] h-[43px] bg-white rounded-[2px] shadow-[0_1px_4px_rgba(0,0,0,0.35)] text-[11.500px] text-[#222] [font-family:'Liberation_Mono',monospace]">
        <span className="absolute left-0 top-[3px] h-[18px] w-[1px] bg-[#e8a020]" />
        <div className="absolute left-[7px] top-[4px] flex flex-col"><Hex s="65 4E 75 6D 62 65 72 54 61 62 6C 65 01 00 12 4C" hi={15} /><Hex s="6F 63 61 6C 56 61 72 69 61 62 6C 65 54 61 62 6C" /></div>
        <div className="absolute left-[523px] top-[4px] flex flex-col"><Asc s="e N u m b e r T a b l e ◦ ◦ ◦ L" hi={[15]} /><Asc s="o c a l V a r i a b l e T a b l" /></div>
      </div>
      <div className="absolute left-[938px] top-[73px] w-[980px] h-[19px] bg-white rounded-[2px] shadow-[0_1px_4px_rgba(0,0,0,0.35)] text-[11.500px] text-[#222] [font-family:'Liberation_Mono',monospace]">
        <div className="absolute left-0 top-0 w-[107px] h-[19px] border border-b-0 border-[#f0a830] bg-white pl-[6px] leading-[19px]">00 60</div>
        <div className="absolute left-[111px] top-0 h-[19px]"><Hex s="65 01 00 04 74 68 69 73 01 00 09 4C 54 31 2F 44" hi={4} /></div>
        <div className="absolute left-[628px] top-0"><Asc s="e ◦ ◦ ◦ t h i s ◦ ◦ ◦ L T 1 / D" hi={[4]} /></div>
      </div>
      <div className="absolute left-[981px] top-[108px] w-[878px] h-[43px] bg-white rounded-[2px] shadow-[0_1px_4px_rgba(0,0,0,0.35)] text-[11.500px] text-[#222] [font-family:'Liberation_Mono',monospace]">
        <div className="absolute left-[3px] top-[2px] flex flex-col"><Hex s="65 01 00 04 74 68 69 73 01 00 09 4C 54 31 2F 44" hi={11} /><Hex s="65 6D 6F 3B 01 00 03 61 64 64 01 00 03 28 29 49" /></div>
        <div className="absolute left-[520px] top-[2px] flex flex-col"><Asc s="e ◦ ◦ ◦ t h i s ◦ ◦ ◦ L T 1 / D" hi={[11, 12]} /><Asc s="e m o ; ◦ ◦ ◦ a d d ◦ ◦ ◦ ( ) I" /></div>
      </div>
      {/* tooltip */}
      <pre className="absolute left-[1254px] top-[358px] w-[353px] h-[179px] bg-[#fffedf] shadow-[1px_1px_3px_rgba(0,0,0,0.35)] pl-[3px] pt-[2px] text-[10px] leading-[16px] text-[#111] [font-family:'Liberation_Mono',monospace]">{`LocalVariableTable_attribute {
    u2 attribute_name_index;
    u4 attribute_length;
    u2 local_variable_table_length;
    {   u2 start_pc;
        u2 length;
        u2 name_index;
        u2 descriptor_index;
        u2 index;
    } local_variable_table[local_variable_table_length];
}`}</pre>
      {/* watermark */}
      <div className="absolute left-[1653px] top-[880px] text-[15.500px] leading-[20px] text-[#e9e9e9] [font-family:'Liberation_Sans',sans-serif] whitespace-nowrap">https://blog.csdn.net/admin741admin</div>
      {/* annotation arrows */}
      <svg className="absolute left-0 top-0 pointer-events-none" width="1920" height="908">
        <Arrow t={[290, 597]} h={[943, 87]} c="#1aab1a" />
        <Arrow t={[424, 610]} h={[1002, 145]} c="#4d4d4d" />
        <Arrow t={[1150, 287]} h={[1777, 57]} c="#ff2a1a" />
        <Arrow t={[575, 589]} h={[916, 297]} c="#ff2a1a" />
        <Arrow t={[1279, 402]} h={[880, 593]} c="#ffba00" />
        <Arrow t={[1278, 418]} h={[1033, 593]} c="#1e9bff" />
        <Arrow t={[1280, 385]} h={[606, 593]} c="#ff2a1a" />
        <Arrow t={[1303, 469]} h={[302, 613]} c="#1aab1a" />
        <Arrow t={[1299, 482]} h={[455, 623]} c="#4d4d4d" />
      </svg>
    </div>
  );
}
